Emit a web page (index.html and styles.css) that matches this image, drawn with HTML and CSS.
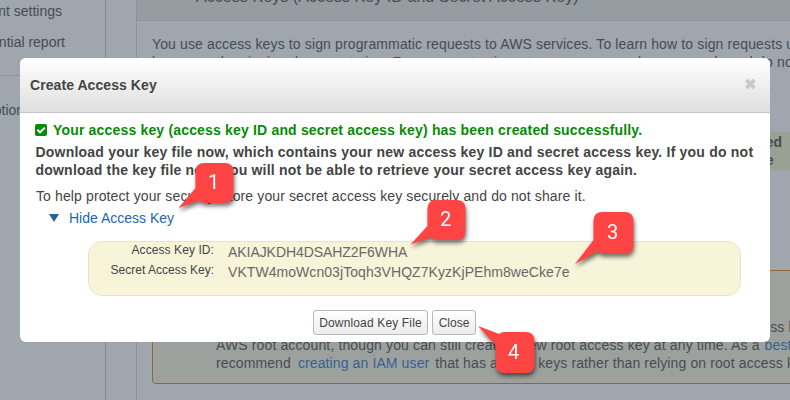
FILE: index.html
```
<!DOCTYPE html>
<html lang="en">
<head>
<meta charset="utf-8">
<title>Create Access Key</title>
<link rel="stylesheet" href="styles.css">
</head>
<body>
<div class="page">
  <aside class="sidebar">
    <div class="nav-item settings">Account settings</div>
    <div class="nav-item report">Credential report</div>
    <div class="nav-item encryption">Encryption keys</div>
  </aside>
  <main class="panel">
    <h2 class="panel-title"><span>Access Keys (Access Key ID and Secret Access Key)</span></h2>
    <div class="panel-body">
      <p class="intro"><span class="i1">You use access keys to sign programmatic requests to AWS services. To learn how to sign requests using</span><br><span class="i2">keys, see the signing documentation. For your protection, store your access keys securely and do not</span></p>
      <div class="table-head"><span>Last Used<br>Service</span></div>
      <div class="notice">
        <p><span class="n1">Important: if you lose your secret key you must create a new root access key here. Access key</span><br><span class="n2">AWS root account, though you can still create a new root access key at any time. As a <a>best practice</a></span><br><span class="n3">recommend <a>creating an IAM user</a> that has access keys rather than relying on root access keys</span></p>
      </div>
    </div>
  </main>
</div>
<section class="modal">
  <header class="modal-header">
    <h1>Create Access Key</h1>
    <svg class="dismiss" width="11" height="10" viewBox="0 0 11 10"><path d="M1.5 1 9.500 9M9.500 1 1.500 9"/></svg>
  </header>
  <div class="modal-body">
    <p class="success"><svg width="12" height="12" viewBox="0 0 12 12"><rect width="12" height="12" rx="2"/><path d="M2.4 5.8 5 8.4 9.8 3.6"/></svg><span>Your access key (access key ID and secret access key) has been created successfully.</span></p>
    <p class="download"><span class="d1">Download your key file now, which contains your new access key ID and secret access key. If you do not</span><br><span class="d2">download the key file now, you will not be able to retrieve your secret access key again.</span></p>
    <p class="protect">To help protect your security, store your secret access key securely and do not share it.</p>
    <div class="toggle"><svg width="10" height="8" viewBox="0 0 10 8"><path d="M0 0H10L5 8Z"/></svg><span>Hide Access Key</span></div>
    <dl class="keys">
      <dt class="k1">Access Key ID:</dt><dd class="v1">AKIAJKDH4DSAHZ2F6WHA</dd>
      <dt class="k2">Secret Access Key:</dt><dd class="v2">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</dd>
    </dl>
    <div class="actions"><button class="save">Download Key File</button><button class="close">Close</button></div>
  </div>
</section>
<svg class="callouts" width="790" height="400" viewBox="0 0 790 400">
  <g><path d="M204.500 163H224.500Q233.500 163 233.500 172V194Q233.500 203 224.500 203H204.500Q202 203 199.500 200.500L178.500 208L195.500 188V172Q195.500 163 204.500 163Z"/><text x="213.500" y="189">1</text></g>
  <g><path d="M436.500 200H456.500Q465.500 200 465.500 209V231Q465.500 240 456.500 240H436.500Q434 240 430.500 237.500L410.500 244.500L427.500 226V209Q427.500 200 436.500 200Z"/><text x="445.500" y="226">2</text></g>
  <g><path d="M602.500 212H624.500Q633.500 212 633.500 221V245Q633.500 254 624.500 254H604.500Q601 254 598 251.500L575 264L593.500 240V221Q593.500 212 602.500 212Z"/><text x="612.500" y="239">3</text></g>
  <g><path d="M504.500 332H525.500Q534.500 332 534.500 341V364Q534.500 373 525.500 373H504.500Q495.500 373 495.500 364V345L478 326L499 334Q501.500 332 504.500 332Z"/><text x="513.500" y="359">4</text></g>
</svg>
</body>
</html>
```
FILE: styles.css
```
* { box-sizing: border-box; }
body { margin: 0; width: 790px; height: 400px; overflow: hidden; position: relative; background: #9fa6ad; color: #444; font: 14px/18px "Liberation Sans", Arial, sans-serif; }
p, h1, h2, dl, dd { margin: 0; }
span { white-space: nowrap; }
.page { display: flex; gap: 30px; width: 790px; height: 400px; overflow: hidden; color: #474c53; }
.page a { color: #34618f; }
.sidebar { flex: none; width: 106px; border-right: 1px solid #858b92; overflow: hidden; }
.nav-item { display: flex; justify-content: flex-end; white-space: nowrap; }
.settings { padding: 2px 43px 0 0; }
.report { padding: 13px 40px 24px 0; border-bottom: 1px dotted #7b8188; }
.encryption { justify-content: flex-start; padding-top: 25px; margin-left: -42px; }
.panel { flex: none; width: 654px; border-left: 1px solid #8c9298; }
.panel-title { height: 21px; background: #959ca2; border-bottom: 1px solid #8d9399; font-size: 16px; font-weight: normal; padding-left: 59px; line-height: 18px; letter-spacing: .06px; }
.panel-title span { display: block; transform: translateY(-12px); }
.panel-body { padding: 14px 0 0 15px; }
.intro { height: 97px; }
.i1 { letter-spacing: .135px; }
.i2 { letter-spacing: .17px; }
.n1 { letter-spacing: .11px; }
.n2 { letter-spacing: .13px; }
.n3 { letter-spacing: .11px; }
.n2 a { margin: 0 1px; }
.n3 a { margin: 0 2px 0 3px; }
.table-head { display: flex; justify-content: flex-end; height: 38px; padding: 1px 8px 0 0; background: #99a094; font-weight: bold; text-align: center; }
.notice { width: 660px; height: 114px; margin-top: 100px; padding: 47px 0 0 63px; border: 1px solid #966530; border-radius: 4px; background: #9da19e; }
.modal { position: absolute; left: 20px; top: 58px; width: 750px; height: 284px; border-radius: 6px; background: #fff; overflow: hidden; }
.modal-header { display: flex; justify-content: space-between; height: 55px; padding: 18px 14px 0 10px; border-bottom: 1px solid #c5c5c5; background: linear-gradient(#fff, #dfdfdf); }
h1 { font-size: 14px; line-height: 18px; letter-spacing: .07px; }
.dismiss { margin-top: 3px; fill: none; stroke: #c9c9c9; stroke-width: 3.8; }
.modal-body { padding: 8px 15px 0 15px; }
.success { display: flex; gap: 6px; align-items: center; color: #078b07; font-weight: bold; letter-spacing: .175px; }
.success rect { fill: #078b07; }
.success path { fill: none; stroke: #fff; stroke-width: 2; }
.download { margin: 4px 0 0 .5px; font-weight: bold; letter-spacing: .21px; }
.protect { margin: 8px 0 0 1px; white-space: nowrap; letter-spacing: .12px; }
.toggle { display: flex; align-items: center; gap: 10px; margin: 4px 0 0 14px; color: #1f65ad; }
.toggle path { fill: #266395; }
.keys { display: grid; grid-template-columns: 125px 1fr; grid-auto-rows: 20px; column-gap: 14px; width: 653px; height: 55px; margin: 14px 0 0 53px; border: 1px solid #e9e4c6; border-radius: 14px; background: #f8f4d9; }
dt { font-size: 12px; line-height: 16px; text-align: right; white-space: nowrap; }
dd { color: #686868; line-height: 20px; }
.k1 { letter-spacing: .08px; }
.v1 { letter-spacing: -.06px; }
.v2 { letter-spacing: .06px; }
.actions { display: flex; gap: 4px; margin: 14px 0 0 278px; }
button { flex: none; height: 25px; padding: 0; border: 1px solid #b7b7b7; border-radius: 3px; background: linear-gradient(#fff, #ececec); color: #444; font: 12px "Liberation Sans", Arial, sans-serif; white-space: nowrap; }
.save { width: 115px; letter-spacing: .15px; }
.close { width: 44px; }
.callouts { position: absolute; left: 0; top: 0; }
.callouts g { filter: drop-shadow(1px 3px 2px rgba(0, 0, 0, .55)); }
.callouts path { fill: #ff4444; }
.callouts text { fill: #fff; font: 20px Roboto, "Liberation Sans", sans-serif; text-anchor: middle; }
```
